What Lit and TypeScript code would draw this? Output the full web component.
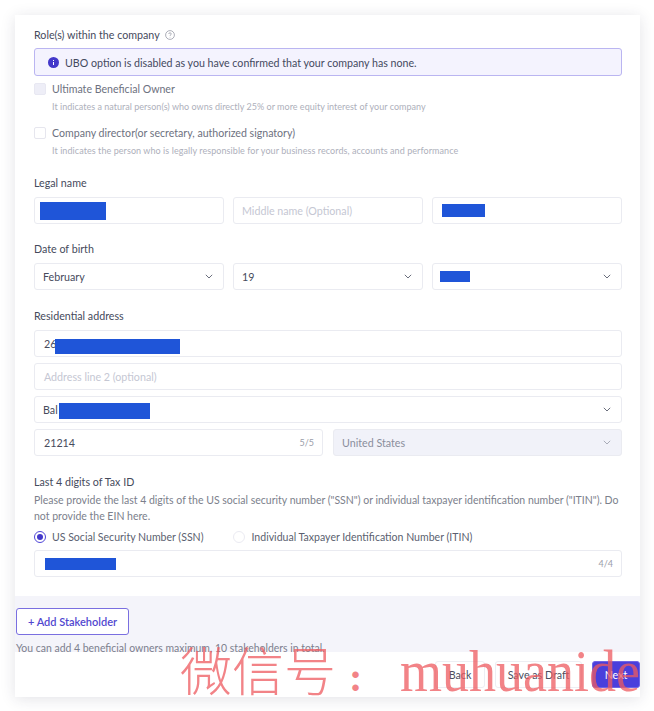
import { LitElement, html, css, svg } from "lit";
import { customElement } from "lit/decorators.js";

const chevron = svg`<svg class="chev" width="8" height="5" viewBox="0 0 8 5" fill="none"><path d="M.8.8 4 4 7.2.8" stroke="currentColor" stroke-width="1"/></svg>`;
const red = (x: number, y: number, w: number, h: number) =>
  html`<i class="red" style="left:${x}px;top:${y}px;width:${w}px;height:${h}px"></i>`;

@customElement("app-root")
export class AppRoot extends LitElement {
  static styles = css`
    :host { display: block; width: 654px; height: 711px; background: #fff; font-family: Lato, "Noto Sans", sans-serif; overflow: hidden; position: relative; }
    .page { padding: 15px 14px 0 15px; }
    .card { height: 682px; display: flex; flex-direction: column; box-shadow: 0 2px 14px rgba(40, 40, 70, .13); background: #fff; }
    .form { height: 581px; padding: 13px 18px 0 19px; box-sizing: border-box; flex: none; }
    .label { font-size: 10.7px; line-height: 14px; color: #454a5c; display: flex; align-items: center; gap: 5px; }
    .alert { margin-top: 6px; height: 28px; box-sizing: border-box; border: 1px solid #bab5f1; border-radius: 3px; background: #f4f3fe; display: flex; align-items: center; gap: 6px; padding-left: 13px; font-size: 10.65px; color: #444a5e; }
    .check { display: flex; align-items: center; gap: 6px; font-size: 10.6px; line-height: 14px; color: #6d7180; }
    .box { width: 12px; height: 12px; box-sizing: border-box; border: 1px solid #e6e6ee; border-radius: 2px; background: #fff; flex: none; }
    .box.off { background: #eeeef7; border-color: #e8e8f2; }
    .check.c1 { margin-top: 6px; }
    .check.c2 { margin-top: 13px; }
    .desc { margin: 5px 0 0 18px; font-size: 9px; line-height: 12px; color: #aeb0bb; letter-spacing: .02px; }
    .desc.wide { letter-spacing: .07px; }
    .mt1 { margin-top: 19px; }
    .mt2 { margin-top: 18px; }
    .mt3 { margin-top: 19px; }
    .row3 { margin-top: 7px; display: grid; grid-template-columns: repeat(3, 1fr); gap: 9px; }
    .row2 { margin-top: 6px; display: grid; grid-template-columns: 1fr 1fr; gap: 10px; }
    .f { position: relative; height: 27px; box-sizing: border-box; border: 1px solid #eaebf1; border-radius: 3px; background: #fff; display: flex; align-items: center; justify-content: space-between; padding: 0 8px; font-size: 10.7px; color: #474b5c; }
    .f.addr { padding-left: 9px; }
    .gap { margin-top: 6px; }
    .first { margin-top: 7px; }
    .f.dis { background: #f1f2f9; color: #8a8e9c; }
    .ph { color: #c5c7d3; }
    .count { font-size: 9px; color: #9a9da9; }
    .chev { color: #6a6e7c; margin-right: 2px; }
    .f.dis .chev { color: #a9acb8; }
    .red { position: absolute; background: #1f55d8; }
    .para { margin: 3px 0 0; font-size: 10.5px; line-height: 16px; color: #7c7f8c; }
    .radios { margin-top: 6px; display: flex; gap: 30px; font-size: 10.55px; line-height: 14px; color: #5b5f70; }
    .radio { display: flex; align-items: center; gap: 6px; }
    .dot { width: 12px; height: 12px; box-sizing: border-box; border-radius: 50%; border: 1px solid #ebebf2; background: #fff; }
    .dot.on { border-color: #4f46d8; display: grid; place-items: center; }
    .dot.on::after { content: ""; width: 6px; height: 6px; border-radius: 50%; background: #4338ca; }
    .ssn { margin-top: 6px; }
    .strip { height: 56px; background: #f4f4fa; flex: none; padding: 12px 0 0 1px; box-sizing: border-box; }
    .add { width: 113px; height: 27px; box-sizing: border-box; border: 1px solid #7a6fe0; border-radius: 3px; background: #fff; color: #5147cf; font: 600 11px Lato, sans-serif; display: flex; align-items: center; justify-content: center; }
    .note { margin-top: 7px; font-size: 10.45px; line-height: 12px; color: #7d808e; white-space: nowrap; }
    .foot { flex: none; height: 45px; display: flex; justify-content: flex-end; align-items: flex-start; padding-top: 9px; box-sizing: border-box; gap: 10px; }
    .btn { height: 27px; box-sizing: border-box; border: 1px solid #edeef3; border-radius: 3px; background: #fff; color: #4a4e60; font-size: 10.7px; display: flex; align-items: center; justify-content: center; }
    .back { width: 50px; }
    .save { width: 87px; }
    .next { width: 48px; background: #4a3fdc; border-color: #6f66e6; color: #fff; }
    .mark { position: absolute; left: 180px; top: 639px; display: flex; align-items: baseline; color: #ee5a5f; opacity: .75; pointer-events: none; white-space: nowrap; }
    .mark .cn { font: 300 52px "Noto Sans CJK SC", sans-serif; line-height: 60px; }
    .mark .colon { font: 700 40px "Liberation Serif", serif; line-height: 60px; margin-left: 13px; }
    .mark .en { font: 60px "Liberation Serif", serif; line-height: 60px; margin-left: 38px; display: inline-block; transform: scaleX(.9); transform-origin: left; }
    .q { flex: none; }
  `;

  render() {
    return html`
      <div class="page"><div class="card">
        <div class="form">
          <div class="label">Role(s) within the company
            <svg class="q" width="10" height="10" viewBox="0 0 10 10" fill="none"><circle cx="5" cy="5" r="4.4" stroke="#8b8e9b" stroke-width=".7"/><path d="M3.7 4c0-.8.6-1.2 1.3-1.2s1.3.5 1.3 1.1c0 .9-1.3 1-1.3 2" stroke="#8b8e9b" stroke-width=".7"/><circle cx="5" cy="7.2" r=".4" fill="#8b8e9b"/></svg>
          </div>
          <div class="alert">
            <svg width="11" height="11" viewBox="0 0 11 11"><circle cx="5.5" cy="5.5" r="5.5" fill="#4338ca"/><rect x="5" y="5" width="1" height="3" fill="#fff"/><rect x="5" y="3" width="1" height="1" fill="#fff"/></svg>
            UBO option is disabled as you have confirmed that your company has none.
          </div>
          <div class="check c1"><span class="box off"></span>Ultimate Beneficial Owner</div>
          <div class="desc">It indicates a natural person(s) who owns directly 25% or more equity interest of your company</div>
          <div class="check c2"><span class="box"></span>Company director(or secretary, authorized signatory)</div>
          <div class="desc wide">It indicates the person who is legally responsible for your business records, accounts and performance</div>

          <div class="label mt1">Legal name</div>
          <div class="row3">
            <div class="f">${red(5, 4, 66, 18)}</div>
            <div class="f ph">Middle name (Optional)</div>
            <div class="f">${red(9, 6, 43, 13)}</div>
          </div>

          <div class="label mt2">Date of birth</div>
          <div class="row3">
            <div class="f">February ${chevron}</div>
            <div class="f">19 ${chevron}</div>
            <div class="f">${red(7, 7, 30, 11)}<span></span>${chevron}</div>
          </div>

          <div class="label mt3">Residential address</div>
          <div class="f addr first">26${red(20, 8, 125, 15)}</div>
          <div class="f addr gap ph">Address line 2 (optional)</div>
          <div class="f gap">Bal${red(24, 6, 91, 16)}<span></span>${chevron}</div>
          <div class="row2">
            <div class="f addr">21214 <span class="count">5/5</span></div>
            <div class="f dis">United States ${chevron}</div>
          </div>

          <div class="label mt3">Last 4 digits of Tax ID</div>
          <p class="para">Please provide the last 4 digits of the US social security number ("SSN") or individual taxpayer identification number ("ITIN"). Do not provide the EIN here.</p>
          <div class="radios">
            <span class="radio"><span class="dot on"></span>US Social Security Number (SSN)</span>
            <span class="radio"><span class="dot"></span>Individual Taxpayer Identification Number (ITIN)</span>
          </div>
          <div class="f ssn">${red(10, 7, 71, 12)}<span></span><span class="count">4/4</span></div>
        </div>
        <div class="strip">
          <div class="add">+ Add Stakeholder</div>
          <div class="note">You can add 4 beneficial owners maximum, 10 stakeholders in total.</div>
        </div>
        <div class="foot">
          <div class="btn back">Back</div>
          <div class="btn save">Save as Draft</div>
          <div class="btn next">Next</div>
        </div>
      </div></div>
      <div class="mark"><span class="cn">微信号</span><span class="colon">:</span><span class="en">muhuanide</span></div>
    `;
  }
}
